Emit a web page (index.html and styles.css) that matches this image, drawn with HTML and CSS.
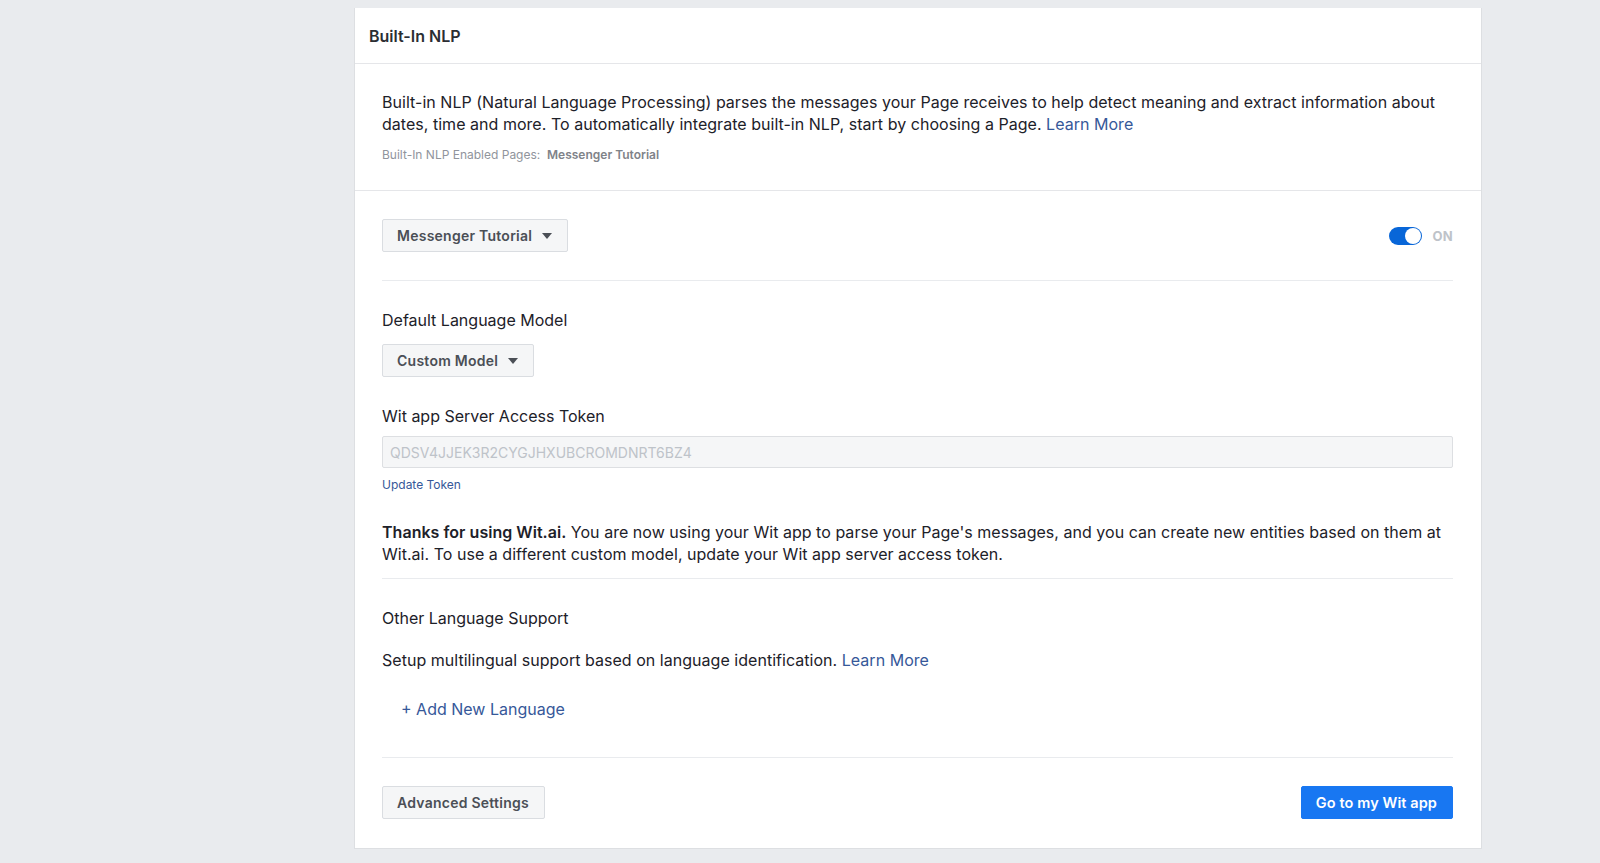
FILE: index.html
```html
<!DOCTYPE html>
<html>
<head>
<meta charset="utf-8">
<link rel="stylesheet" href="styles.css">
</head>
<body>
<div class="page">
  <aside class="side"></aside>
  <main class="card">
    <header class="card-head">Built-In NLP</header>
    <section class="intro">
      <p class="text">Built-in NLP (Natural Language Processing) parses the messages your Page receives to help detect meaning and extract information about dates, time and more. To automatically integrate built-in NLP, start by choosing a Page. <a class="link">Learn More</a></p>
      <p class="caption">Built-In NLP Enabled Pages:&nbsp; <b>Messenger Tutorial</b></p>
    </section>
    <section class="settings">
      <div class="row-between">
        <button class="btn btn-select">Messenger Tutorial <span class="caret"></span></button>
        <div class="switch-wrap">
          <span class="switch"><span class="knob"></span></span>
          <span class="switch-label">ON</span>
        </div>
      </div>
      <hr class="divider first">
      <div class="label">Default Language Model</div>
      <button class="btn btn-select model">Custom Model <span class="caret"></span></button>
      <div class="label token-label">Wit app Server Access Token</div>
      <input class="input" type="text" placeholder="QDSV4JJEK3R2CYGJHXUBCROMDNRT6BZ4">
      <a class="small-link">Update Token</a>
      <p class="text thanks"><b>Thanks for using Wit.ai.</b> You are now using your Wit app to parse your Page's messages, and you can create new entities based on them at Wit.ai. To use a different custom model, update your Wit app server access token.</p>
      <hr class="divider">
      <div class="label other">Other Language Support</div>
      <p class="text setup">Setup multilingual support based on language identification. <a class="link">Learn More</a></p>
      <a class="link add">+ Add New Language</a>
      <hr class="divider bottom">
      <div class="row-between footer">
        <button class="btn">Advanced Settings</button>
        <button class="btn btn-primary">Go to my Wit app</button>
      </div>
    </section>
  </main>
</div>
</body>
</html>
```

FILE: styles.css
```css
* { box-sizing: border-box; }
html, body { margin: 0; padding: 0; }
body {
  background: #e9ebee;
  font-family: Inter, "Noto Sans", sans-serif;
  color: #1d2129;
  height: 863px;
  overflow: hidden;
}
.page {
  display: flex;
  padding-top: 8px;
}
.side { width: 354px; flex: none; }
.card {
  width: 1128px;
  background: #fff;
  border: 1px solid #dddfe2;
  border-top: none;
  display: flex;
  flex-direction: column;
}
.card-head {
  height: 56px;
  display: flex;
  align-items: center;
  padding: 0 14px;
  font-weight: 600;
  font-size: 16px;
  color: #2b2e33;
  border-bottom: 1px solid #e5e6e9;
}
.intro {
  padding: 27px 28px 27px 27px;
  border-bottom: 1px solid #e5e6e9;
}
.text {
  margin: 0;
  font-size: 16px;
  line-height: 22px;
  letter-spacing: 0.03px;
  color: #1d2129;
}
.link { color: #365899; text-decoration: none; cursor: pointer; }
.caption {
  margin: 12px 0 0;
  font-size: 12px;
  line-height: 16px;
  color: #90949c;
}
.caption b { font-weight: 600; color: #7f8389; }
.settings {
  padding: 28px 28px 29px 27px;
  display: flex;
  flex-direction: column;
  align-items: flex-start;
}
.row-between {
  display: flex;
  justify-content: space-between;
  align-items: center;
  width: 100%;
}
.btn {
  height: 33px;
  padding: 0 15px 0 14px;
  border: 1px solid #dadde1;
  border-radius: 2px;
  background: #f5f6f7;
  color: #4b4f56;
  font-family: inherit;
  font-size: 14px;
  font-weight: 600;
  display: inline-flex;
  align-items: center;
  gap: 8px;
  letter-spacing: 0.25px;
}
.btn-select { padding-right: 15px; }
.caret {
  width: 0; height: 0;
  border-left: 5px solid transparent;
  border-right: 5px solid transparent;
  border-top: 6px solid #4b4f56;
  margin-left: 2px;
}
.switch-wrap { display: flex; align-items: center; gap: 10px; margin-right: 0; }
.switch {
  width: 33px; height: 18px;
  border-radius: 9px;
  background: #0866d8;
  position: relative;
}
.knob {
  position: absolute;
  right: 1px; top: 1px;
  width: 16px; height: 16px;
  border-radius: 50%;
  background: #fff;
}
.switch-label { font-size: 13px; font-weight: 700; color: #bec3c9; letter-spacing: 0.3px; }
.divider {
  width: 100%;
  border: none;
  border-top: 1px solid #e9ebee;
  margin: 13px 0 0;
}
.divider.first { margin-top: 28px; }
.label { font-size: 16px; line-height: 20px; margin-top: 29px; color: #1d2129; }
.model { margin-top: 14px; }
.token-label { margin-top: 29px; }
.input {
  width: 100%;
  height: 32px;
  margin-top: 10px;
  border: 1px solid #dddfe2;
  border-radius: 2px;
  background: #f5f6f7;
  padding: 0 7px;
  font-family: inherit;
  font-size: 14px;
  color: #1d2129;
}
.input::placeholder { color: #bec3c9; }
.small-link {
  margin-top: 9px;
  font-size: 12px;
  line-height: 16px;
  color: #365899;
}
.thanks { margin-top: 28px; }
.thanks b { font-weight: 600; }
.other { margin-top: 29px; }
.setup { margin-top: 21px; }
.add { margin-top: 27px; margin-left: 19px; font-size: 16px; line-height: 22px; }
.divider.bottom { margin-top: 37px; }
.footer { margin-top: 28px; }
.btn-primary {
  background: #1877f2;
  border-color: #1877f2;
  color: #fff;
  font-size: 14.5px;
  letter-spacing: 0.1px;
}
```
